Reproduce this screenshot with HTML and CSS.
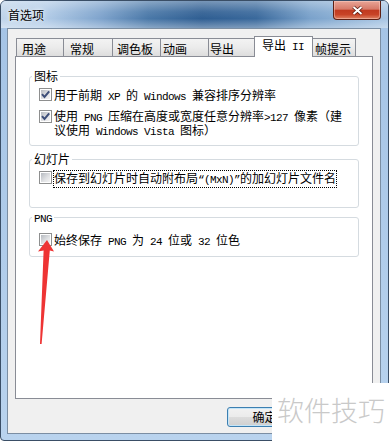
FILE: index.html
```html
<!DOCTYPE html>
<html lang="zh-CN">
<head>
<meta charset="utf-8">
<title>首选项</title>
<link rel="stylesheet" href="styles.css">
</head>
<body>
<div class="window">
  <div class="titlebar">
    <span class="title">首选项</span>
    <div class="close">
      <svg width="13" height="11" viewBox="0 0 13 11"><path d="M2.5 2 L10.5 9 M10.5 2 L2.5 9" fill="none" stroke="#5a1a10" stroke-width="3.6"/><path d="M2.5 2 L10.5 9 M10.5 2 L2.5 9" fill="none" stroke="#ffffff" stroke-width="2"/></svg>
    </div>
  </div>
  <div class="client">
    <div class="tabs">
      <div class="tab">用途</div>
      <div class="tab">常规</div>
      <div class="tab">调色板</div>
      <div class="tab">动画</div>
      <div class="tab">导出</div>
      <div class="tab active">导出<span class="en"> II</span></div>
      <div class="tab">帧提示</div>
    </div>
    <div class="panel">
      <div class="group g-icon">
        <div class="legend">图标</div>
        <div class="row r1">
          <span class="cb checked"><svg width="11" height="11" viewBox="0 0 11 11"><path d="M2 5.2 L4.5 8 L9.2 2.4" fill="none" stroke="#3e4f79" stroke-width="2"/></svg></span>
          <span class="label">用于前期<span class="en"> XP </span>的<span class="en"> Windows </span>兼容排序分辨率</span>
        </div>
        <div class="row r2">
          <span class="cb checked"><svg width="11" height="11" viewBox="0 0 11 11"><path d="M2 5.2 L4.5 8 L9.2 2.4" fill="none" stroke="#3e4f79" stroke-width="2"/></svg></span>
          <span class="label multi">使用<span class="en"> PNG </span>压缩在高度或宽度任意分辨率<span class="en">&gt;127 </span>像素（建<br>议使用<span class="en"> Windows Vista </span>图标）</span>
        </div>
      </div>
      <div class="group g-slide">
        <div class="legend">幻灯片</div>
        <div class="row r1">
          <span class="cb"></span>
          <span class="label focus">保存到幻灯片时自动附布局<span class="en">“(MxN)”</span>的加幻灯片文件名</span>
        </div>
      </div>
      <div class="group g-png">
        <div class="legend"><span class="en">PNG</span></div>
        <div class="row r3">
          <span class="cb"></span>
          <span class="label">始终保存<span class="en"> PNG </span>为<span class="en"> 24 </span>位或<span class="en"> 32 </span>位色</span>
        </div>
      </div>
    </div>
    <div class="buttons">
      <button class="btn">确定</button>
    </div>
  </div>
</div>
<svg class="arrow" width="389" height="441" viewBox="0 0 389 441"><polygon points="47,240 54,251.5 49.8,250.5 41.6,344 40,344 43.6,250.5 38,251.5" fill="#ee3434"/></svg>
<div class="watermark">软件技巧</div>
</body>
</html>
```
FILE: styles.css
```css
* { box-sizing: border-box; }
html, body { margin: 0; padding: 0; background: #ffffff; }
body {
  position: relative;
  width: 389px;
  height: 441px;
  overflow: hidden;
  font-family: "Noto Sans CJK SC", "Liberation Sans", sans-serif;
  font-size: 12px;
  color: #000;
}
.en {
  font-family: "Liberation Mono", "DejaVu Sans Mono", monospace;
  font-size: 11px;
  letter-spacing: -0.6px;
}
.window {
  width: 389px;
  height: 441px;
  border: 1px solid #3a4e66;
  border-radius: 6px 6px 4px 4px;
  background: linear-gradient(to bottom, #a4c3e5, #b9d3ee);
  padding: 0 7px 6px 6px;
  display: flex;
  flex-direction: column;
  overflow: hidden;
}
.titlebar {
  flex: none;
  height: 27px;
  margin: 0 -7px 0 -6px;
  display: flex;
  align-items: flex-start;
  justify-content: space-between;
  background:
    linear-gradient(to bottom, rgba(255,255,255,0.35), rgba(255,255,255,0.08) 40%, rgba(255,255,255,0) 65%, rgba(255,255,255,0.35) 100%),
    linear-gradient(to right, #bfd4ea 0%, #b0cae6 12%, #7ea3cc 26%, #4a78a8 38%, #2f5e92 52%, #3a699c 66%, #7aa2cb 80%, #a9c6e4 100%);
}
.title {
  padding-left: 7px;
  line-height: 27px;
  text-shadow: 0 0 6px rgba(255,255,255,0.9), 0 0 3px rgba(255,255,255,0.8);
}
.close {
  width: 48px;
  height: 19px;
  margin-right: 7px;
  border: 1px solid #5e2014;
  border-top: none;
  border-radius: 0 0 4px 4px;
  background: linear-gradient(#e9a597, #d77a69 45%, #c13a20 52%, #c84327 75%, #df8263);
  box-shadow: inset 0 0 0 1px rgba(255,215,205,0.45);
  display: flex;
  align-items: center;
  justify-content: center;
}
.client {
  flex: 1;
  border: 1px solid #7b8ea3;
  background: #f0f0f0;
  padding: 7px 7px 6px;
  display: flex;
  flex-direction: column;
}
.tabs {
  display: grid;
  grid-template-columns: 47px 49px 48px 48px 46px 58px 43px;
  align-items: end;
  height: 20px;
  padding-left: 1px;
}
.tab {
  height: 18px;
  margin-right: -1px;
  border: 1px solid #898c95;
  border-bottom: none;
  background: linear-gradient(#f3f3f3, #ebebeb 50%, #dddddd);
  line-height: 13px;
  padding-top: 3px;
  white-space: nowrap;
}
.tab:nth-child(1) { padding-left: 5px; }
.tab:nth-child(2) { padding-left: 6px; }
.tab:nth-child(3) { padding-left: 4px; }
.tab:nth-child(4) { padding-left: 2px; }
.tab:nth-child(5) { padding-left: 1px; }
.tab:nth-child(6) { padding-left: 7px; }
.tab:nth-child(7) { padding-left: 2px; }
.tab.active {
  position: relative;
  z-index: 1;
  height: 21px;
  margin-bottom: -1px;
  padding-top: 1px;
  background: #ffffff;
}
.panel {
  flex: none;
  height: 343px;
  border: 1px solid #898c95;
  background: #ffffff;
  padding: 19px 13px 0;
}
.group {
  border: 1px solid #d5dbe0;
  border-radius: 3px;
  padding: 0 9px 7px;
}
.g-slide { margin-top: 13px; padding-bottom: 20px; }
.g-png { margin-top: 9px; }
.legend {
  width: fit-content;
  margin: -7px 0 0 -7px;
  padding: 0 2px;
  line-height: 12px;
  background: #ffffff;
  white-space: nowrap;
}
.row {
  display: flex;
  align-items: flex-start;
  gap: 2px;
  line-height: 13px;
  margin-top: 6px;
}
.r3 { margin-top: 8px; }
.label { white-space: nowrap; }
.label.multi { line-height: 12px; }
.label.focus { outline: 1px dotted #000; }
.cb {
  flex: none;
  width: 13px;
  height: 13px;
  border: 1px solid #8e8f8f;
  padding: 1px;
  background: linear-gradient(135deg, #b6bac0 0%, #e2e3e5 60%, #f4f4f4 100%) content-box, #ffffff;
}
.cb svg { display: block; margin: -1px; }
.buttons {
  flex: none;
  display: flex;
  margin-top: 8px;
  padding-left: 212px;
}
.btn {
  width: 75px;
  height: 20px;
  margin: 0;
  padding: 0;
  border: 1px solid #3c7fb1;
  border-radius: 3px;
  background: linear-gradient(#f2f2f2, #ebebeb 50%, #dddddd 50%, #cfcfcf);
  box-shadow: inset 0 0 0 1px #c4e5f8;
  font-family: "Noto Sans CJK SC", sans-serif;
  font-size: 12px;
  line-height: 16px;
  color: #000;
}
.arrow {
  position: absolute;
  left: 0;
  top: 0;
  pointer-events: none;
}
.watermark {
  position: absolute;
  left: 272px;
  top: 383px;
  width: 117px;
  height: 58px;
  background: #ffffff;
  padding: 13px 0 0 5px;
  font-size: 27px;
  line-height: 28px;
  font-weight: 300;
  color: #c9c9c9;
  white-space: nowrap;
}
```
